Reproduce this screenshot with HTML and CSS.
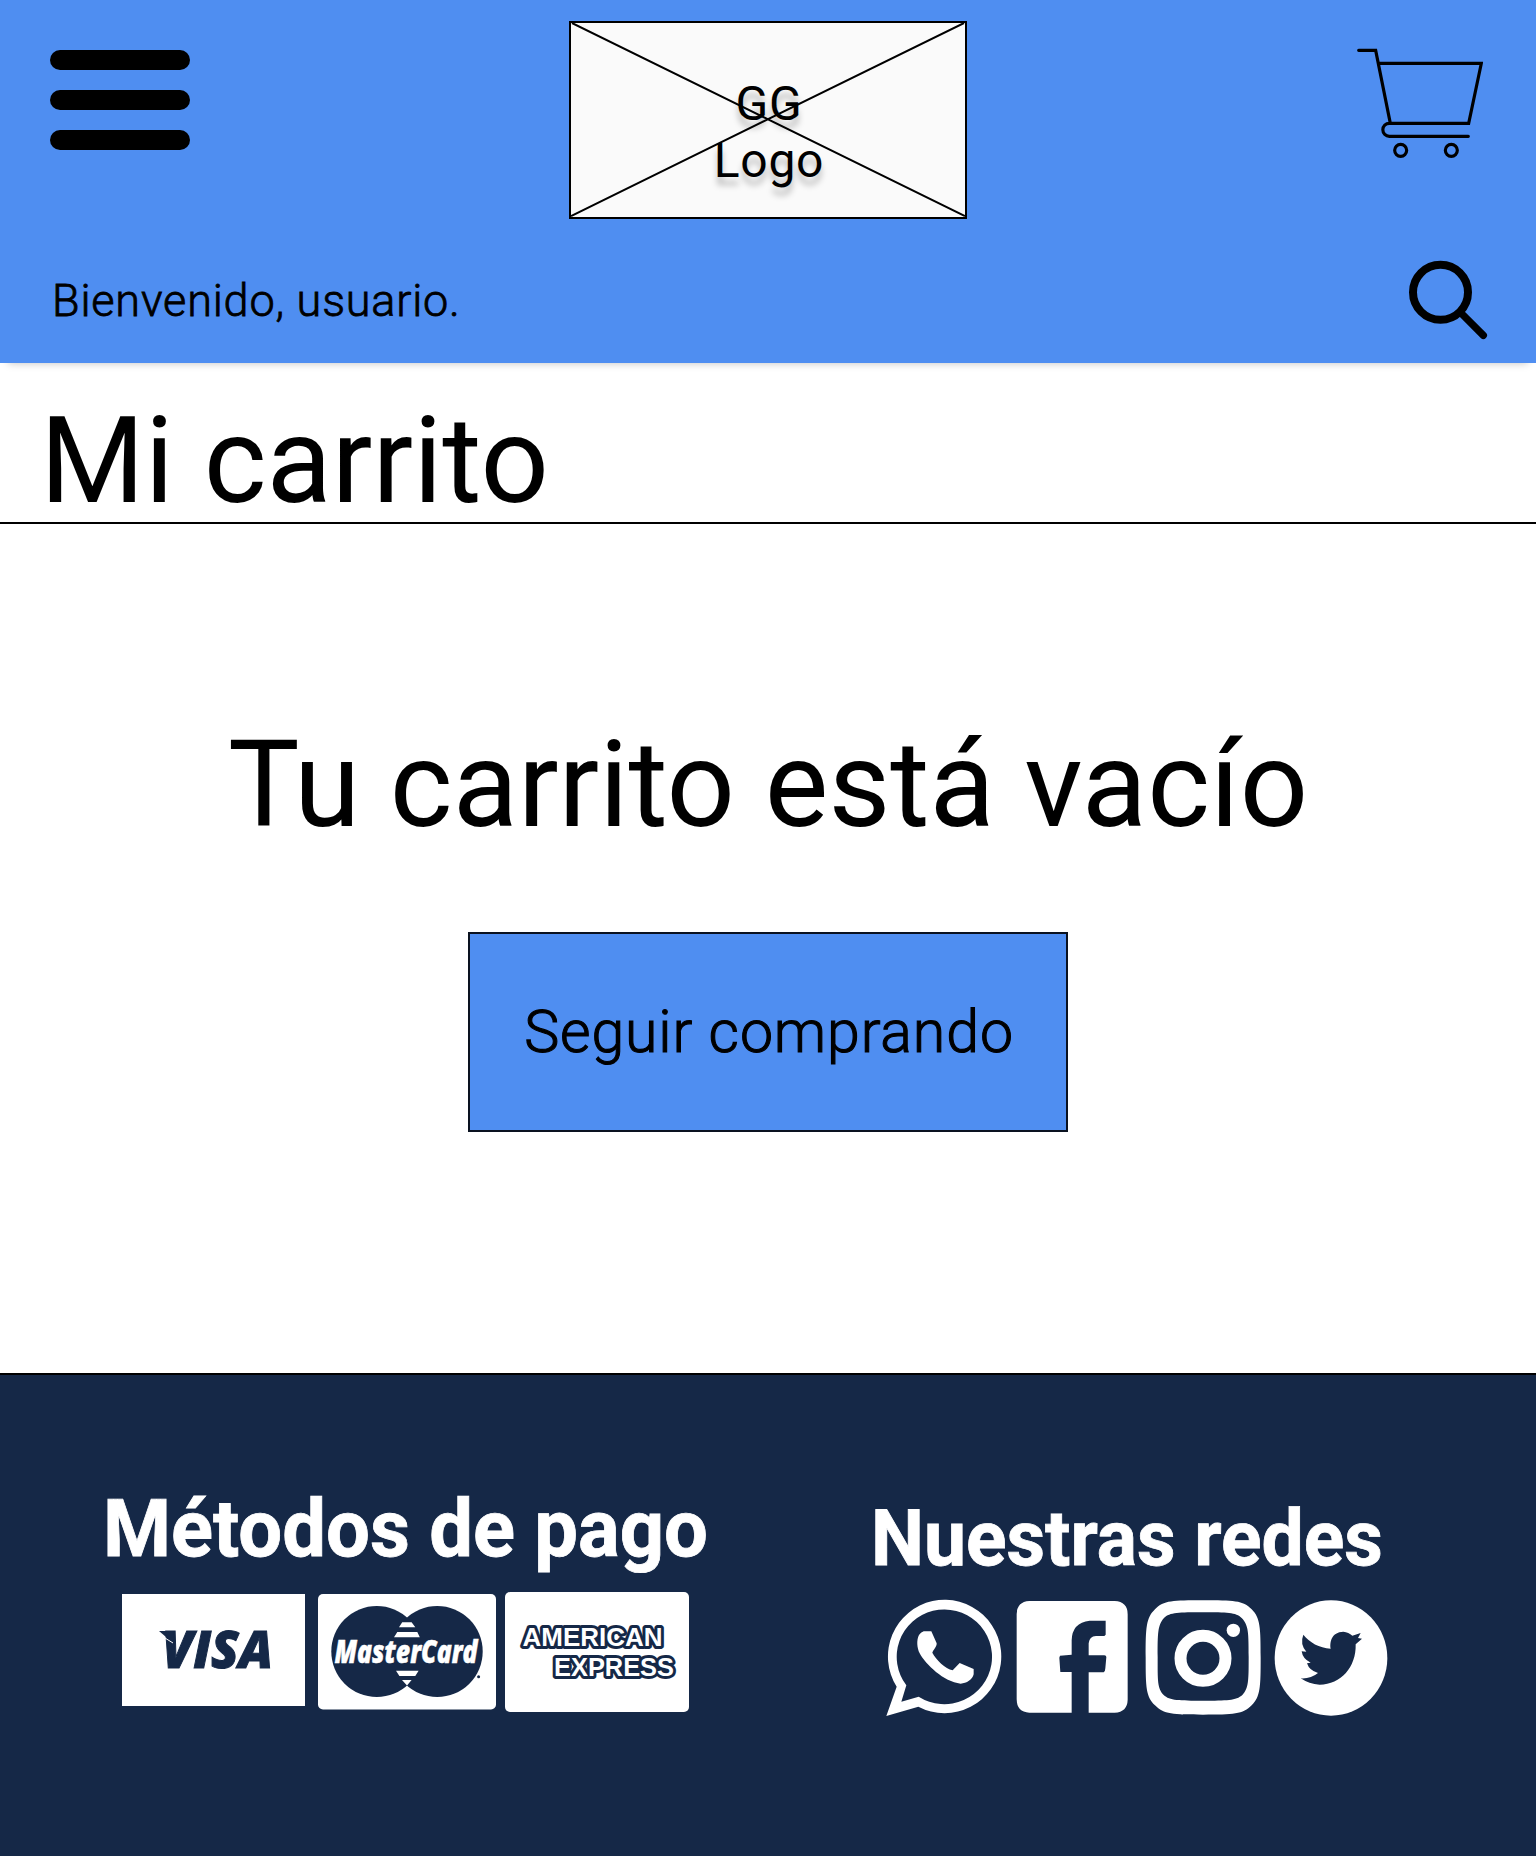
FILE: index.html
```html
<!DOCTYPE html>
<html lang="es">
<head>
<meta charset="utf-8">
<title>Mi carrito</title>
<link rel="stylesheet" href="styles.css">
</head>
<body>
<header class="header">
  <div class="header-top">
    <button class="menu" aria-label="Menú"><span class="menu-bar"></span><span class="menu-bar"></span><span class="menu-bar"></span></button>
    <div class="logo">
      <svg class="logo-cross" viewBox="0 0 394 194" preserveAspectRatio="none"><path d="M1 0 394 193M393 0 0 193" fill="none" stroke="#000" stroke-width="2"/></svg>
      <span class="logo-text">GG<br>Logo</span>
    </div>
    <svg class="cart" viewBox="81 81 378 336" fill="none" stroke="#000" stroke-width="9.5" stroke-linecap="round">
      <path d="M86 91H137L181 310M147 130H454L416 310H178A19.500 19.500 0 0 0 178 349H415"/>
      <circle cx="212" cy="391" r="18"/><circle cx="364" cy="391" r="18"/>
    </svg>
  </div>
  <div class="header-bottom">
    <p class="welcome">Bienvenido, usuario.</p>
    <svg class="search" viewBox="234 720 240 240" fill="none" stroke="#000" stroke-linecap="round">
      <circle cx="331.500" cy="817" r="82.500" stroke-width="24"/><path d="M396 882 460 946" stroke-width="22"/>
    </svg>
  </div>
</header>
<main class="main">
  <h1 class="title">Mi carrito</h1>
  <section class="empty">
    <p class="empty-text">Tu carrito está vacío</p>
    <a class="button"><span class="button-text">Seguir comprando</span></a>
  </section>
</main>
<footer class="footer">
  <section class="payments">
    <h2 class="payments-title">Métodos de pago</h2>
    <div class="cards">
      <svg class="visa" viewBox="122 1594 183 112">
        <rect x="122" y="1594" width="183" height="112" fill="#fff"/>
        <text class="visa-text" x="162" y="1668" textLength="111" lengthAdjust="spacingAndGlyphs">VISA</text>
        <path d="M159 1631H174L173 1643Z" fill="#152847"/>
        <path d="M165 1638 173 1643" stroke="#fff" stroke-width="1"/>
      </svg>
      <svg class="mastercard" viewBox="318 1594 178 116">
        <rect x="318" y="1594" width="178" height="115.500" rx="5" fill="#fff"/>
        <g fill="#152847"><circle cx="376.800" cy="1651.500" r="45.500"/><circle cx="437.200" cy="1651.500" r="45.500"/><circle cx="478.600" cy="1676.700" r="1.500"/></g>
        <path d="M402.200 1622.300H411.600L415.300 1627.300H399ZM397.300 1632H417.300L419.800 1637.300H394ZM396 1670.700H418.600L415.300 1676H399.400ZM402 1680H411.600L407 1685.500Z" fill="#fff"/>
        <text class="mastercard-text" x="334.500" y="1663" textLength="143" lengthAdjust="spacingAndGlyphs">MasterCard</text>
      </svg>
      <svg class="amex" viewBox="505.500 1592 184 120">
        <rect x="505.500" y="1592" width="184" height="120" rx="5" fill="#fff"/>
        <text class="amex-text" x="523" y="1645.500" textLength="140" lengthAdjust="spacingAndGlyphs">AMERICAN</text>
        <text class="amex-text" x="554.500" y="1676" textLength="120" lengthAdjust="spacingAndGlyphs">EXPRESS</text>
      </svg>
    </div>
  </section>
  <section class="social">
    <h2 class="social-title">Nuestras redes</h2>
    <div class="networks">
      <svg class="network" width="117" height="118" viewBox="18 27 351 354">
        <path d="M19 378 50 290A170 170 0 1 1 115 350Z" fill="#fff"/>
        <path d="M64 335 79 286A143 142 0 1 1 116 320Z" fill="#152847"/>
        <path d="M131 124H154L170 160C171 169 159 181 157 188C168 210 196 236 218 241L239 219L281 237V253C277 269 260 280 242 281C191 276 137 223 119 190C111 173 109 151 117 135Q122 127 131 124Z" fill="#fff"/>
      </svg>
      <svg class="network" width="116" height="118" viewBox="408 27 348 354">
        <path d="M448 33H704Q743 35 743 73V329Q742 366 704 368H626V247H671Q676 243 676 235L679 201Q679 196 673 196H626V160Q628 139 648 138H673L677 134V92H629Q576 98 575 151V194L540 197 538 203 541 246H575V368H448Q410 366 410 328V72Q411 35 448 33Z" fill="#fff"/>
      </svg>
      <svg class="network" width="116" height="118" viewBox="45 27 348 354">
        <path d="M219 31C310 31 339 31 365 58C391 84 392 113 392 203C392 292 391 320 365 346C339 373 310 374 219 374C129 374 101 373 75 346C48 320 47 292 47 203C47 113 48 84 75 58C101 31 129 31 219 31Z" fill="#fff"/>
        <path d="M219 67C290 67 318 67 335 84C356 105 356 130 356 201C356 273 356 295 337 315C318 332 290 332 219 332C148 332 119 332 101 315C82 295 83 273 83 201C83 130 83 105 102 84C119 67 148 67 219 67Z" fill="#152847"/>
        <circle cx="219" cy="205" r="67.500" fill="none" stroke="#fff" stroke-width="36"/><circle cx="310" cy="121" r="20" fill="#fff"/>
      </svg>
      <svg class="network" width="114" height="118" viewBox="432 27 342 354">
        <ellipse cx="603" cy="204" rx="169" ry="173" fill="#fff"/>
        <path d="M520 134C538 157 568 174 602 176C599 157 604 126 640 125Q656 126 667 137L692 129 684 144 696 146 677 163C679 231 633 284 569 284Q537 282 512 265Q542 267 564 249Q538 242 531 220L542 218Q518 207 515 184L529 185Q509 162 520 134Z" fill="#152847"/>
      </svg>
    </div>
  </section>
</footer>
</body>
</html>
```
FILE: styles.css
```css
* { box-sizing: border-box; }
body {
  margin: 0;
  background: #fff;
  color: #000;
  font-family: Roboto, "Liberation Sans", sans-serif;
}
h1, h2, p { margin: 0; font-weight: 400; white-space: nowrap; }
svg { display: block; flex: none; }

.header {
  height: 363px;
  padding: 21px 48px 0 50px;
  background: #4f8ef1;
  box-shadow: 0 8px 8px -8px rgba(0, 0, 0, 0.25);
}
.header-top {
  display: grid;
  grid-template-columns: 519px 398px 1fr;
  align-items: start;
  height: 239px;
}
.menu {
  display: flex;
  flex-direction: column;
  gap: 20px;
  width: 140px;
  margin: 29px 0 0;
  padding: 0;
  border: 0;
  background: none;
}
.menu-bar { height: 20px; border-radius: 10px; background: #000; }
.logo {
  position: relative;
  height: 198px;
  padding: 52px 0 0 2px;
  border: 2px solid #000;
  background: #fafafa;
  text-align: center;
}
.logo-cross { position: absolute; inset: 0; width: 394px; height: 194px; }
.logo-text {
  position: relative;
  font-size: 48px;
  line-height: 57px;
  letter-spacing: 0.7px;
  text-shadow: 0 8px 6px rgba(0, 0, 0, 0.25);
}
.cart { width: 126px; height: 112px; margin: 26px 5px 0 0; justify-self: end; }
.header-bottom { display: flex; justify-content: space-between; }
.welcome {
  padding: 14px 0 0 2px;
  font-size: 45px;
  font-weight: 300;
  line-height: 54px;
  letter-spacing: 0.8px;
  -webkit-text-stroke: 0.8px #000;
}
.search { width: 80px; height: 80px; }

.title {
  height: 161px;
  padding: 28px 0 0 40px;
  border-bottom: 2px solid #000;
  font-size: 120px;
  line-height: 140px;
}
.empty {
  display: flex;
  flex-direction: column;
  align-items: center;
  height: 849px;
  padding-top: 191px;
}
.empty-text { font-size: 120px; line-height: 141px; }
.button {
  display: flex;
  justify-content: center;
  width: 600px;
  height: 200px;
  margin-top: 76px;
  padding: 63px 0 0 2px;
  border: 2px solid #0a1220;
  background: #4f8ef1;
}
.button-text {
  font-size: 59px;
  font-weight: 300;
  line-height: 70px;
  letter-spacing: 0.9px;
  -webkit-text-stroke: 1.1px #000;
}

.footer {
  display: flex;
  height: 483px;
  border-top: 2px solid #000;
  background: #152847;
  color: #fff;
}
.payments { width: 871px; padding: 107px 0 0 103px; }
.payments-title {
  width: max-content;
  height: 94px;
  font-size: 80px;
  font-weight: 700;
  line-height: 94px;
  clip-path: inset(0 0 3px);
  transform: scaleX(0.972);
  transform-origin: left;
  -webkit-text-stroke: 0.8px #fff;
}
.cards { display: flex; align-items: flex-start; padding: 16px 0 0 19px; }
.visa { width: 183px; height: 112px; margin: 2px 13px 0 0; }
.mastercard { width: 178px; height: 116px; margin: 2px 9px 0 0; }
.amex { width: 184px; height: 120px; }
.visa-text { font: italic 800 51px "Open Sans", sans-serif; fill: #152847; stroke: #152847; stroke-width: 1px; }
.mastercard-text { font: italic 800 32px "Open Sans", sans-serif; fill: #fff; stroke: #fff; stroke-width: 0.5px; }
.amex-text {
  font: 700 25.5px "Liberation Sans", sans-serif;
  fill: #fff;
  stroke: #152847;
  stroke-width: 6px;
  stroke-linejoin: round;
  paint-order: stroke;
}
.social { padding-top: 119px; }
.social-title {
  width: max-content;
  font-size: 77px;
  font-weight: 700;
  line-height: 90px;
  transform: scaleX(0.975);
  transform-origin: left;
  -webkit-text-stroke: 0.8px #fff;
}
.networks { display: flex; gap: 13px; padding: 15px 0 0 15px; }
```
